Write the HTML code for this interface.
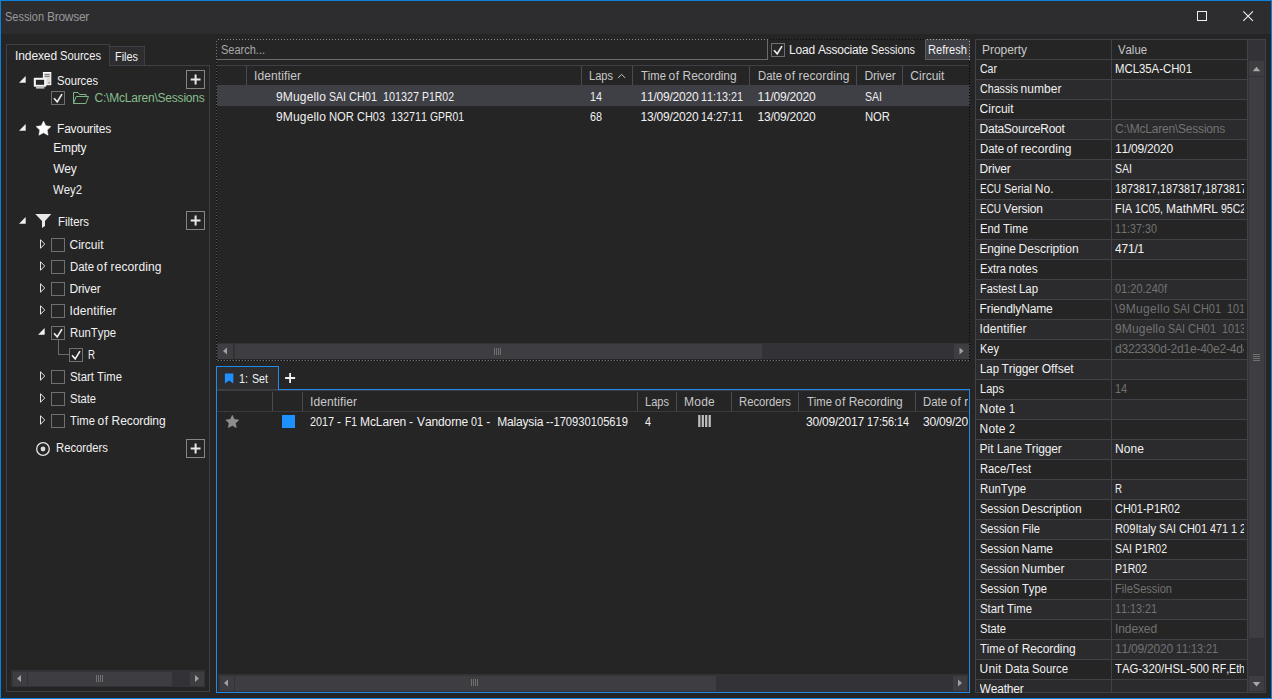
<!DOCTYPE html><html><head><meta charset="utf-8"><title>Session Browser</title><style>
html,body{margin:0;padding:0;}body{width:1272px;height:699px;overflow:hidden;background:#252526;position:relative;font-family:"Liberation Sans",sans-serif;font-size:12px;color:#f1f1f1;}
.a{position:absolute;display:block;}.t{position:absolute;white-space:pre;line-height:14px;height:14px;font-size:12px;font-kerning:none;word-spacing:-0.33px;}.c{overflow:hidden;}.s{display:inline-block;transform-origin:0 0;vertical-align:baseline;}
</style></head><body>
<div class="a" style="left:0px;top:0px;width:1272px;height:699px;border:1px solid #0882de;box-sizing:border-box;"></div>
<div class="a" style="left:1px;top:1px;width:1270px;height:33px;background:#2d2d30;"></div>
<svg class="a" style="left:1190px;top:4px" width="72" height="24" viewBox="0 0 72 24"><rect x="7.5" y="7.5" width="9" height="9" fill="none" stroke="#f1f1f1" stroke-width="1"/><path d="M53.3 7.3 L62.9 16.9 M62.9 7.3 L53.3 16.9" stroke="#f1f1f1" stroke-width="1.1" fill="none"/></svg>
<div class="a" style="left:6px;top:65px;width:204px;height:627px;border:1px solid #3f3f46;box-sizing:border-box;"></div>
<div class="a" style="left:6px;top:44px;width:104px;height:22px;background:#252526;box-sizing:border-box;border:1px solid #3f3f46;border-bottom:none;"></div>
<div class="a" style="left:110px;top:46px;width:35px;height:20px;background:#2d2d30;box-sizing:border-box;border:1px solid #3f3f46;border-left:none;"></div>
<svg class="a" style="left:19.2px;top:76.2px" width="7" height="7" viewBox="0 0 7 7"><path d="M6.7 0 V6.7 H0 Z" fill="#f1f1f1"/></svg>
<svg class="a" style="left:33px;top:72px" width="19" height="17" viewBox="0 0 19 17"><rect x="10.4" y="0.5" width="7.4" height="12.2" fill="#dcdcdc" stroke="#ffffff" stroke-width="1"/><path d="M11.6 2.6h5M11.6 4.4h5" stroke="#777" stroke-width="1"/><rect x="15.6" y="10" width="1" height="1.4" fill="#666"/><rect x="0.8" y="5.8" width="12.6" height="9" rx="0.8" fill="#f4f4f4"/><rect x="2.9" y="7.8" width="8.2" height="5" fill="#252526"/><rect x="3" y="15.2" width="8.4" height="1.3" fill="#e6e6e6"/></svg>
<svg class="a" style="left:186px;top:70px" width="19" height="19" viewBox="0 0 19 19"><rect x="0.5" y="0.5" width="18" height="18" fill="none" stroke="#858585"/><path d="M9.6 4.6 V14.4 M4.7 9.5 H14.5" stroke="#e8e8e8" stroke-width="2" fill="none"/></svg>
<svg class="a" style="left:51px;top:91px" width="14" height="14" viewBox="0 0 14 14"><rect x="0.5" y="0.5" width="13" height="13" fill="#262627" stroke="#707070"/><path d="M3 7.3 L6.2 10.9 L11 3.2" fill="none" stroke="#f1f1f1" stroke-width="1.6"/></svg>
<svg class="a" style="left:72px;top:91px" width="18" height="14" viewBox="0 0 18 14"><path d="M1.5 12.5 V1.5 H6 L7.5 3.5 H14 V5.5 M1.5 12.5 L4.2 5.5 H16.5 L13.8 12.5 Z" fill="none" stroke="#7fb489" stroke-width="1"/></svg>
<svg class="a" style="left:19.2px;top:124.2px" width="7" height="7" viewBox="0 0 7 7"><path d="M6.7 0 V6.7 H0 Z" fill="#f1f1f1"/></svg>
<svg class="a" style="left:35px;top:120px" width="17" height="17" viewBox="0 0 17 17"><path d="M8.50 1.10 L10.79 5.74 L15.92 6.49 L12.21 10.11 L13.08 15.21 L8.50 12.80 L3.92 15.21 L4.79 10.11 L1.08 6.49 L6.21 5.74 Z" fill="#ffffff" stroke="#ffffff" stroke-width="0.5" stroke-linejoin="round"/></svg>
<svg class="a" style="left:19.2px;top:217.2px" width="7" height="7" viewBox="0 0 7 7"><path d="M6.7 0 V6.7 H0 Z" fill="#f1f1f1"/></svg>
<svg class="a" style="left:35px;top:213px" width="17" height="16" viewBox="0 0 17 16"><path d="M0.3 1 H16.3 L10 8 V13 L7 15 V8 Z" fill="#e8e8e8"/></svg>
<svg class="a" style="left:186px;top:211px" width="19" height="19" viewBox="0 0 19 19"><rect x="0.5" y="0.5" width="18" height="18" fill="none" stroke="#858585"/><path d="M9.6 4.6 V14.4 M4.7 9.5 H14.5" stroke="#e8e8e8" stroke-width="2" fill="none"/></svg>
<svg class="a" style="left:40px;top:239px" width="6" height="10" viewBox="0 0 6 10"><path d="M0.5 0.8 L4.8 5 L0.5 9.2 Z" fill="none" stroke="#e6e6e6" stroke-width="1"/></svg>
<svg class="a" style="left:51px;top:238px" width="14" height="14" viewBox="0 0 14 14"><rect x="0.5" y="0.5" width="13" height="13" fill="#262627" stroke="#707070"/></svg>
<svg class="a" style="left:40px;top:261px" width="6" height="10" viewBox="0 0 6 10"><path d="M0.5 0.8 L4.8 5 L0.5 9.2 Z" fill="none" stroke="#e6e6e6" stroke-width="1"/></svg>
<svg class="a" style="left:51px;top:260px" width="14" height="14" viewBox="0 0 14 14"><rect x="0.5" y="0.5" width="13" height="13" fill="#262627" stroke="#707070"/></svg>
<svg class="a" style="left:40px;top:283px" width="6" height="10" viewBox="0 0 6 10"><path d="M0.5 0.8 L4.8 5 L0.5 9.2 Z" fill="none" stroke="#e6e6e6" stroke-width="1"/></svg>
<svg class="a" style="left:51px;top:282px" width="14" height="14" viewBox="0 0 14 14"><rect x="0.5" y="0.5" width="13" height="13" fill="#262627" stroke="#707070"/></svg>
<svg class="a" style="left:40px;top:305px" width="6" height="10" viewBox="0 0 6 10"><path d="M0.5 0.8 L4.8 5 L0.5 9.2 Z" fill="none" stroke="#e6e6e6" stroke-width="1"/></svg>
<svg class="a" style="left:51px;top:304px" width="14" height="14" viewBox="0 0 14 14"><rect x="0.5" y="0.5" width="13" height="13" fill="#262627" stroke="#707070"/></svg>
<svg class="a" style="left:38.2px;top:327.6px" width="7" height="7" viewBox="0 0 7 7"><path d="M6.7 0 V6.7 H0 Z" fill="#f1f1f1"/></svg>
<svg class="a" style="left:51px;top:326px" width="14" height="14" viewBox="0 0 14 14"><rect x="0.5" y="0.5" width="13" height="13" fill="#262627" stroke="#707070"/><path d="M3 7.3 L6.2 10.9 L11 3.2" fill="none" stroke="#f1f1f1" stroke-width="1.6"/></svg>
<svg class="a" style="left:40px;top:371px" width="6" height="10" viewBox="0 0 6 10"><path d="M0.5 0.8 L4.8 5 L0.5 9.2 Z" fill="none" stroke="#e6e6e6" stroke-width="1"/></svg>
<svg class="a" style="left:51px;top:370px" width="14" height="14" viewBox="0 0 14 14"><rect x="0.5" y="0.5" width="13" height="13" fill="#262627" stroke="#707070"/></svg>
<svg class="a" style="left:40px;top:393px" width="6" height="10" viewBox="0 0 6 10"><path d="M0.5 0.8 L4.8 5 L0.5 9.2 Z" fill="none" stroke="#e6e6e6" stroke-width="1"/></svg>
<svg class="a" style="left:51px;top:392px" width="14" height="14" viewBox="0 0 14 14"><rect x="0.5" y="0.5" width="13" height="13" fill="#262627" stroke="#707070"/></svg>
<svg class="a" style="left:40px;top:415px" width="6" height="10" viewBox="0 0 6 10"><path d="M0.5 0.8 L4.8 5 L0.5 9.2 Z" fill="none" stroke="#e6e6e6" stroke-width="1"/></svg>
<svg class="a" style="left:51px;top:414px" width="14" height="14" viewBox="0 0 14 14"><rect x="0.5" y="0.5" width="13" height="13" fill="#262627" stroke="#707070"/></svg>
<div class="a" style="left:58px;top:340px;width:11px;height:14px;border-left:1px solid #6a6a6a;border-bottom:1px solid #6a6a6a;"></div>
<svg class="a" style="left:69px;top:348px" width="14" height="14" viewBox="0 0 14 14"><rect x="0.5" y="0.5" width="13" height="13" fill="#262627" stroke="#707070"/><path d="M3 7.3 L6.2 10.9 L11 3.2" fill="none" stroke="#f1f1f1" stroke-width="1.6"/></svg>
<svg class="a" style="left:35px;top:441px" width="16" height="16" viewBox="0 0 16 16"><circle cx="8" cy="8" r="6.3" fill="none" stroke="#e6e6e6" stroke-width="1.3"/><circle cx="8" cy="8" r="2.4" fill="#dcdcdc"/></svg>
<svg class="a" style="left:186px;top:439px" width="19" height="19" viewBox="0 0 19 19"><rect x="0.5" y="0.5" width="18" height="18" fill="none" stroke="#858585"/><path d="M9.6 4.6 V14.4 M4.7 9.5 H14.5" stroke="#e8e8e8" stroke-width="2" fill="none"/></svg>
<div class="a" style="left:11px;top:670px;width:194px;height:17px;background:#333337;"></div>
<div class="a" style="left:12.5px;top:671.5px;width:14px;height:14.0px;background:#3e3e42;"></div>
<div class="a" style="left:189.5px;top:671.5px;width:14px;height:14.0px;background:#3e3e42;"></div>
<div class="a" style="left:28px;top:671.5px;width:144px;height:14.0px;background:#3e3e42;"></div>
<svg class="a" style="left:11px;top:670px" width="195" height="17" viewBox="0 0 195 17"><path d="M6.0 8.5 l4 -3.5 v7 Z" fill="#a0a0a0"/><path d="M188.0 8.5 l-4 -3.5 v7 Z" fill="#a0a0a0"/><path d="M85.5 5 v7 m2 -7 v7 m2 -7 v7 m2 -7 v7" stroke="#707070" stroke-width="1" fill="none"/></svg>
<div class="a" style="left:216px;top:39px;width:552px;height:21px;background:#252526;border:1px solid #6a6a6a;box-sizing:border-box;"></div>
<svg class="a" style="left:771px;top:43px" width="14" height="14" viewBox="0 0 14 14"><rect x="0.5" y="0.5" width="13" height="13" fill="#262627" stroke="#707070"/><path d="M3 7.3 L6.2 10.9 L11 3.2" fill="none" stroke="#f1f1f1" stroke-width="1.6"/></svg>
<div class="a" style="left:925px;top:39px;width:45px;height:21px;background:#3f3f46;border:1px solid #5e5e63;box-sizing:border-box;"></div>
<div class="a" style="left:217px;top:65px;width:753px;height:1px;background:#3f3f46;"></div>
<div class="a" style="left:246px;top:66px;width:1px;height:19px;background:#4a4a50;"></div>
<div class="a" style="left:581px;top:66px;width:1px;height:19px;background:#4a4a50;"></div>
<div class="a" style="left:632px;top:66px;width:1px;height:19px;background:#4a4a50;"></div>
<div class="a" style="left:749px;top:66px;width:1px;height:19px;background:#4a4a50;"></div>
<div class="a" style="left:856px;top:66px;width:1px;height:19px;background:#4a4a50;"></div>
<div class="a" style="left:902px;top:66px;width:1px;height:19px;background:#4a4a50;"></div>
<svg class="a" style="left:617px;top:73px" width="9" height="6" viewBox="0 0 9 6"><path d="M1.1 4.9 L4.6 1.3 L8.1 4.9" fill="none" stroke="#c8c8c8" stroke-width="1"/></svg>
<div class="a" style="left:217px;top:85px;width:753px;height:21px;background:#3f3f46;"></div>
<div class="a" style="left:216.5px;top:343px;width:753.5px;height:16px;background:#333337;"></div>
<div class="a" style="left:218.0px;top:343.5px;width:15px;height:15.0px;background:#3e3e42;"></div>
<div class="a" style="left:953.5px;top:343.5px;width:15px;height:15.0px;background:#3e3e42;"></div>
<div class="a" style="left:234.5px;top:343.5px;width:527.0px;height:15.0px;background:#3e3e42;"></div>
<svg class="a" style="left:216px;top:343px" width="755" height="16" viewBox="0 0 755 16"><path d="M7.0 8.0 l4 -3.5 v7 Z" fill="#a0a0a0"/><path d="M747.5 8.0 l-4 -3.5 v7 Z" fill="#a0a0a0"/><path d="M278.5 5 v7 m2 -7 v7 m2 -7 v7 m2 -7 v7" stroke="#707070" stroke-width="1" fill="none"/></svg>
<div class="a" style="left:768px;top:39px;width:157px;height:1px;background:repeating-linear-gradient(to right,transparent 0,transparent 2px,#0c0c0c 2px,#0c0c0c 3px);"></div>
<div class="a" style="left:216px;top:360px;width:754px;height:1px;background:repeating-linear-gradient(to right,#0a0a0a 0,#0a0a0a 1px,#3e3e3e 1px,#3e3e3e 2px,#747474 2px,#747474 3px);"></div>
<div class="a" style="left:216px;top:60px;width:1px;height:300px;background:repeating-linear-gradient(to bottom,#101010 0,#101010 2px,#5c5c5c 2px,#5c5c5c 3px);"></div>
<div class="a" style="left:969px;top:60px;width:1px;height:300px;background:repeating-linear-gradient(to bottom,transparent 0,transparent 2px,#000 2px,#000 3px);"></div>
<div class="a" style="left:216px;top:39px;width:552px;height:1px;background:repeating-linear-gradient(to right,#252526 0,#252526 2px,#8c8c8c 2px,#8c8c8c 3px);"></div>
<div class="a" style="left:216px;top:39px;width:1px;height:21px;background:repeating-linear-gradient(to bottom,#252526 0,#252526 2px,#787878 2px,#787878 3px);"></div>
<div class="a" style="left:925px;top:39px;width:45px;height:1px;background:repeating-linear-gradient(to right,#434349 0,#434349 2px,#a4a4a4 2px,#a4a4a4 3px);"></div>
<div class="a" style="left:969px;top:39px;width:1px;height:21px;background:repeating-linear-gradient(to bottom,#434349 0,#434349 2px,#a4a4a4 2px,#a4a4a4 3px);"></div>
<div class="a" style="left:216px;top:389px;width:754px;height:304px;border:1px solid #2389e8;box-sizing:border-box;"></div>
<div class="a" style="left:216px;top:366px;width:63px;height:24px;background:#2d2d30;box-sizing:border-box;border:1px solid #2389e8;border-bottom:none;"></div>
<div class="a" style="left:217px;top:389px;width:61px;height:1px;background:#3a3f48;"></div>
<div class="a" style="left:217px;top:390px;width:752px;height:1px;background:#3a3a40;"></div>
<svg class="a" style="left:224px;top:373px" width="10" height="11" viewBox="0 0 10 11"><path d="M0.9 0.4 H9.3 V10.5 L5.1 7.4 L0.9 10.5 Z" fill="#1e90ff"/></svg>
<svg class="a" style="left:284px;top:372px" width="12" height="12" viewBox="0 0 12 12"><path d="M6.1 1 V11 M1.1 6 H11.1" stroke="#f1f1f1" stroke-width="1.8" fill="none"/></svg>
<div class="a" style="left:217px;top:411px;width:752px;height:1px;background:#3a3a3e;"></div>
<div class="a" style="left:272px;top:392px;width:1px;height:19px;background:#4a4a50;"></div>
<div class="a" style="left:302px;top:392px;width:1px;height:19px;background:#4a4a50;"></div>
<div class="a" style="left:637px;top:392px;width:1px;height:19px;background:#4a4a50;"></div>
<div class="a" style="left:676px;top:392px;width:1px;height:19px;background:#4a4a50;"></div>
<div class="a" style="left:731px;top:392px;width:1px;height:19px;background:#4a4a50;"></div>
<div class="a" style="left:798px;top:392px;width:1px;height:19px;background:#4a4a50;"></div>
<div class="a" style="left:915px;top:392px;width:1px;height:19px;background:#4a4a50;"></div>
<svg class="a" style="left:225px;top:414px" width="15" height="15" viewBox="0 0 15 15"><path d="M7.30 1.20 L9.30 5.35 L13.86 5.97 L10.53 9.15 L11.36 13.68 L7.30 11.50 L3.24 13.68 L4.07 9.15 L0.74 5.97 L5.30 5.35 Z" fill="#8e8e8e" stroke="#8e8e8e" stroke-width="0.5" stroke-linejoin="round"/></svg>
<div class="a" style="left:282px;top:415px;width:13px;height:13px;background:#1e90ff;"></div>
<svg class="a" style="left:698px;top:415px" width="14" height="12" viewBox="0 0 14 12"><path d="M0.2 0h2.2v12h-2.2zM3.7 0h2.2v12h-2.2zM7.1 0h2.2v12h-2.2zM10.6 0h2.2v12h-2.2z" fill="#c2c2c2"/></svg>
<div class="a" style="left:218px;top:674px;width:750px;height:18px;background:#333337;"></div>
<div class="a" style="left:219.5px;top:675.5px;width:14px;height:15.0px;background:#3e3e42;"></div>
<div class="a" style="left:952.5px;top:675.5px;width:14px;height:15.0px;background:#3e3e42;"></div>
<div class="a" style="left:235px;top:675.5px;width:481px;height:15.0px;background:#3e3e42;"></div>
<svg class="a" style="left:218px;top:674px" width="751" height="18" viewBox="0 0 751 18"><path d="M6.0 9.0 l4 -3.5 v7 Z" fill="#a0a0a0"/><path d="M744.0 9.0 l-4 -3.5 v7 Z" fill="#a0a0a0"/><path d="M253.5 5 v7 m2 -7 v7 m2 -7 v7 m2 -7 v7" stroke="#707070" stroke-width="1" fill="none"/></svg>
<div class="a" style="left:975px;top:39px;width:291px;height:654px;background:#414147;"></div>
<div class="a" style="left:976px;top:40px;width:135px;height:19px;background:#252526;"></div>
<div class="a" style="left:1112px;top:40px;width:135px;height:19px;background:#252526;"></div>
<div class="a" style="left:1248px;top:40px;width:17px;height:20px;background:#333337;"></div>
<div class="a" style="left:976px;top:60px;width:135px;height:19px;background:#252526;"></div>
<div class="a" style="left:1112px;top:60px;width:135px;height:19px;background:#252526;"></div>
<div class="a" style="left:976px;top:80px;width:135px;height:19px;background:#2b2b2d;"></div>
<div class="a" style="left:1112px;top:80px;width:135px;height:19px;background:#2b2b2d;"></div>
<div class="a" style="left:976px;top:100px;width:135px;height:19px;background:#252526;"></div>
<div class="a" style="left:1112px;top:100px;width:135px;height:19px;background:#252526;"></div>
<div class="a" style="left:976px;top:120px;width:135px;height:19px;background:#2b2b2d;"></div>
<div class="a" style="left:1112px;top:120px;width:135px;height:19px;background:#2b2b2d;"></div>
<div class="a" style="left:976px;top:140px;width:135px;height:19px;background:#252526;"></div>
<div class="a" style="left:1112px;top:140px;width:135px;height:19px;background:#252526;"></div>
<div class="a" style="left:976px;top:160px;width:135px;height:19px;background:#2b2b2d;"></div>
<div class="a" style="left:1112px;top:160px;width:135px;height:19px;background:#2b2b2d;"></div>
<div class="a" style="left:976px;top:180px;width:135px;height:19px;background:#252526;"></div>
<div class="a" style="left:1112px;top:180px;width:135px;height:19px;background:#252526;"></div>
<div class="a" style="left:976px;top:200px;width:135px;height:19px;background:#2b2b2d;"></div>
<div class="a" style="left:1112px;top:200px;width:135px;height:19px;background:#2b2b2d;"></div>
<div class="a" style="left:976px;top:220px;width:135px;height:19px;background:#252526;"></div>
<div class="a" style="left:1112px;top:220px;width:135px;height:19px;background:#252526;"></div>
<div class="a" style="left:976px;top:240px;width:135px;height:19px;background:#2b2b2d;"></div>
<div class="a" style="left:1112px;top:240px;width:135px;height:19px;background:#2b2b2d;"></div>
<div class="a" style="left:976px;top:260px;width:135px;height:19px;background:#252526;"></div>
<div class="a" style="left:1112px;top:260px;width:135px;height:19px;background:#252526;"></div>
<div class="a" style="left:976px;top:280px;width:135px;height:19px;background:#2b2b2d;"></div>
<div class="a" style="left:1112px;top:280px;width:135px;height:19px;background:#2b2b2d;"></div>
<div class="a" style="left:976px;top:300px;width:135px;height:19px;background:#252526;"></div>
<div class="a" style="left:1112px;top:300px;width:135px;height:19px;background:#252526;"></div>
<div class="a" style="left:976px;top:320px;width:135px;height:19px;background:#2b2b2d;"></div>
<div class="a" style="left:1112px;top:320px;width:135px;height:19px;background:#2b2b2d;"></div>
<div class="a" style="left:976px;top:340px;width:135px;height:19px;background:#252526;"></div>
<div class="a" style="left:1112px;top:340px;width:135px;height:19px;background:#252526;"></div>
<div class="a" style="left:976px;top:360px;width:135px;height:19px;background:#2b2b2d;"></div>
<div class="a" style="left:1112px;top:360px;width:135px;height:19px;background:#2b2b2d;"></div>
<div class="a" style="left:976px;top:380px;width:135px;height:19px;background:#252526;"></div>
<div class="a" style="left:1112px;top:380px;width:135px;height:19px;background:#252526;"></div>
<div class="a" style="left:976px;top:400px;width:135px;height:19px;background:#2b2b2d;"></div>
<div class="a" style="left:1112px;top:400px;width:135px;height:19px;background:#2b2b2d;"></div>
<div class="a" style="left:976px;top:420px;width:135px;height:19px;background:#252526;"></div>
<div class="a" style="left:1112px;top:420px;width:135px;height:19px;background:#252526;"></div>
<div class="a" style="left:976px;top:440px;width:135px;height:19px;background:#2b2b2d;"></div>
<div class="a" style="left:1112px;top:440px;width:135px;height:19px;background:#2b2b2d;"></div>
<div class="a" style="left:976px;top:460px;width:135px;height:19px;background:#252526;"></div>
<div class="a" style="left:1112px;top:460px;width:135px;height:19px;background:#252526;"></div>
<div class="a" style="left:976px;top:480px;width:135px;height:19px;background:#2b2b2d;"></div>
<div class="a" style="left:1112px;top:480px;width:135px;height:19px;background:#2b2b2d;"></div>
<div class="a" style="left:976px;top:500px;width:135px;height:19px;background:#252526;"></div>
<div class="a" style="left:1112px;top:500px;width:135px;height:19px;background:#252526;"></div>
<div class="a" style="left:976px;top:520px;width:135px;height:19px;background:#2b2b2d;"></div>
<div class="a" style="left:1112px;top:520px;width:135px;height:19px;background:#2b2b2d;"></div>
<div class="a" style="left:976px;top:540px;width:135px;height:19px;background:#252526;"></div>
<div class="a" style="left:1112px;top:540px;width:135px;height:19px;background:#252526;"></div>
<div class="a" style="left:976px;top:560px;width:135px;height:19px;background:#2b2b2d;"></div>
<div class="a" style="left:1112px;top:560px;width:135px;height:19px;background:#2b2b2d;"></div>
<div class="a" style="left:976px;top:580px;width:135px;height:19px;background:#252526;"></div>
<div class="a" style="left:1112px;top:580px;width:135px;height:19px;background:#252526;"></div>
<div class="a" style="left:976px;top:600px;width:135px;height:19px;background:#2b2b2d;"></div>
<div class="a" style="left:1112px;top:600px;width:135px;height:19px;background:#2b2b2d;"></div>
<div class="a" style="left:976px;top:620px;width:135px;height:19px;background:#252526;"></div>
<div class="a" style="left:1112px;top:620px;width:135px;height:19px;background:#252526;"></div>
<div class="a" style="left:976px;top:640px;width:135px;height:19px;background:#2b2b2d;"></div>
<div class="a" style="left:1112px;top:640px;width:135px;height:19px;background:#2b2b2d;"></div>
<div class="a" style="left:976px;top:660px;width:135px;height:19px;background:#252526;"></div>
<div class="a" style="left:1112px;top:660px;width:135px;height:19px;background:#252526;"></div>
<div class="a" style="left:976px;top:680px;width:135px;height:12px;background:#2b2b2d;"></div>
<div class="a" style="left:1112px;top:680px;width:135px;height:12px;background:#2b2b2d;"></div>
<div class="a" style="left:1248px;top:60px;width:17px;height:632px;background:#333337;"></div>
<div class="a" style="left:1249px;top:61px;width:15px;height:15px;background:#3e3e42;"></div>
<div class="a" style="left:1249px;top:676px;width:15px;height:15px;background:#3e3e42;"></div>
<div class="a" style="left:1249px;top:77px;width:15px;height:561px;background:#3e3e42;"></div>
<svg class="a" style="left:1249px;top:61px" width="15" height="631" viewBox="0 0 15 631"><path d="M7.5 5.8 l3.7 4.4 h-7.4 Z" fill="#a8a8a8"/><path d="M7.5 625.4 l3.7 -4.4 h-7.4 Z" fill="#a8a8a8"/><path d="M4 293.5 h7 m-7 2 h7 m-7 2 h7 m-7 2 h7" stroke="#707070" stroke-width="1" fill="none"/></svg>
<div class="a" style="left:976px;top:692px;width:290px;height:1px;background:#414147;"></div>
<div class="a" style="left:972px;top:693px;width:298px;height:5px;background:#252526;"></div>
<span class="t" style="left:5px;top:10px;color:#999999;"><span class="s" style="width:39px;transform:scaleX(0.913)">Session</span> <span style="letter-spacing:-0.29px">Browser</span></span>
<span class="t" style="left:15px;top:49px;"><span style="letter-spacing:-0.1px">Indexed</span> <span class="s" style="width:41px;transform:scaleX(0.931)">Sources</span></span>
<span class="t" style="left:115px;top:50px;"><span class="s" style="width:23px;transform:scaleX(0.908)">Files</span></span>
<span class="t" style="left:57px;top:74px;"><span class="s" style="width:41px;transform:scaleX(0.931)">Sources</span></span>
<span class="t" style="left:94.5px;top:91px;color:#85bd8c;letter-spacing:-0.21px;">C:\McLaren\Sessions</span>
<span class="t" style="left:57px;top:122px;letter-spacing:-0.2px;">Favourites</span>
<span class="t" style="left:53.3px;top:141px;letter-spacing:-0.2px;">Empty</span>
<span class="t" style="left:53.3px;top:162px;letter-spacing:-0.33px;">Wey</span>
<span class="t" style="left:53.3px;top:183px;"><span class="s" style="width:29px;transform:scaleX(0.945)">Wey2</span></span>
<span class="t" style="left:57.5px;top:215px;"><span class="s" style="width:31px;transform:scaleX(0.949)">Filters</span></span>
<span class="t" style="left:69.5px;top:238px;letter-spacing:0px;">Circuit</span>
<span class="t" style="left:69.5px;top:260px;"><span class="s" style="width:24px;transform:scaleX(0.947)">Date</span> <span style="letter-spacing:0.5px">of</span> <span style="letter-spacing:0.11px">recording</span></span>
<span class="t" style="left:69.5px;top:282px;letter-spacing:-0.17px;">Driver</span>
<span class="t" style="left:69.5px;top:304px;letter-spacing:0.1px;">Identifier</span>
<span class="t" style="left:69.5px;top:326px;"><span class="s" style="width:46px;transform:scaleX(0.945)">RunType</span></span>
<span class="t" style="left:69.5px;top:370px;"><span class="s" style="width:24px;transform:scaleX(0.947)">Start</span> <span class="s" style="width:25px;transform:scaleX(0.937)">Time</span></span>
<span class="t" style="left:69.5px;top:392px;"><span class="s" style="width:26px;transform:scaleX(0.928)">State</span></span>
<span class="t" style="left:69.5px;top:414px;"><span class="s" style="width:25px;transform:scaleX(0.937)">Time</span> <span style="letter-spacing:0.5px">of</span> <span style="letter-spacing:-0.08px">Recording</span></span>
<span class="t" style="left:87.5px;top:348px;"><span class="s" style="width:7px;transform:scaleX(0.808)">R</span></span>
<span class="t" style="left:56.2px;top:441px;"><span class="s" style="width:52px;transform:scaleX(0.939)">Recorders</span></span>
<span class="t" style="left:221px;top:43px;color:#a8a8a8;"><span class="s" style="width:44px;transform:scaleX(0.916)">Search...</span></span>
<span class="t" style="left:789px;top:43px;"><span style="letter-spacing:-0.17px">Load</span> <span style="letter-spacing:-0.23px">Associate</span> <span class="s" style="width:44px;transform:scaleX(0.904)">Sessions</span></span>
<span class="t" style="left:928.3px;top:43px;"><span class="s" style="width:39px;transform:scaleX(0.928)">Refresh</span></span>
<span class="t" style="left:254px;top:69px;color:#c8c8c8;letter-spacing:0.1px;">Identifier</span>
<span class="t" style="left:589px;top:69px;color:#c8c8c8;"><span class="s" style="width:24px;transform:scaleX(0.922)">Laps</span></span>
<span class="t" style="left:640.5px;top:69px;color:#c8c8c8;"><span class="s" style="width:25px;transform:scaleX(0.937)">Time</span> <span style="letter-spacing:0.5px">of</span> <span style="letter-spacing:-0.08px">Recording</span></span>
<span class="t" style="left:757.5px;top:69px;color:#c8c8c8;"><span class="s" style="width:24px;transform:scaleX(0.947)">Date</span> <span style="letter-spacing:0.5px">of</span> <span style="letter-spacing:0.11px">recording</span></span>
<span class="t" style="left:864.5px;top:69px;color:#c8c8c8;letter-spacing:-0.17px;">Driver</span>
<span class="t" style="left:910.3px;top:69px;color:#c8c8c8;letter-spacing:0px;">Circuit</span>
<span class="t" style="left:276px;top:90px;"><span style="letter-spacing:0.16px">9Mugello</span> <span class="s" style="width:17px;transform:scaleX(0.879)">SAI</span> <span class="s" style="width:28px;transform:scaleX(0.913)">CH01</span>  <span class="s" style="width:36px;transform:scaleX(0.899)">101327</span> <span class="s" style="width:32px;transform:scaleX(0.872)">P1R02</span></span>
<span class="t" style="left:276px;top:110px;"><span style="letter-spacing:0.16px">9Mugello</span> <span class="s" style="width:25px;transform:scaleX(0.937)">NOR</span> <span class="s" style="width:28px;transform:scaleX(0.913)">CH03</span>  <span class="s" style="width:36px;transform:scaleX(0.899)">132711</span> <span class="s" style="width:34px;transform:scaleX(0.864)">GPR01</span></span>
<span class="t" style="left:589.5px;top:90px;"><span class="s" style="width:12px;transform:scaleX(0.899)">14</span></span>
<span class="t" style="left:589.5px;top:110px;"><span class="s" style="width:12px;transform:scaleX(0.899)">68</span></span>
<span class="t" style="left:640.5px;top:90px;"><span style="letter-spacing:-0.21px">11/09/2020</span> <span class="s" style="width:42px;transform:scaleX(0.899)">11:13:21</span></span>
<span class="t" style="left:640.5px;top:110px;"><span style="letter-spacing:-0.21px">13/09/2020</span> <span class="s" style="width:42px;transform:scaleX(0.899)">14:27:11</span></span>
<span class="t" style="left:757.5px;top:90px;letter-spacing:-0.21px;">11/09/2020</span>
<span class="t" style="left:757.5px;top:110px;letter-spacing:-0.21px;">13/09/2020</span>
<span class="t" style="left:864.5px;top:90px;"><span class="s" style="width:17px;transform:scaleX(0.879)">SAI</span></span>
<span class="t" style="left:864.5px;top:110px;"><span class="s" style="width:25px;transform:scaleX(0.937)">NOR</span></span>
<span class="t" style="left:238.9px;top:372px;"><span class="s" style="width:9px;transform:scaleX(0.899)">1:</span></span>
<span class="t" style="left:252.2px;top:372px;"><span class="s" style="width:16px;transform:scaleX(0.888)">Set</span></span>
<span class="t" style="left:310px;top:395px;color:#c8c8c8;letter-spacing:0.1px;">Identifier</span>
<span class="t" style="left:645px;top:395px;color:#c8c8c8;"><span class="s" style="width:24px;transform:scaleX(0.922)">Laps</span></span>
<span class="t" style="left:684px;top:395px;color:#c8c8c8;letter-spacing:0.25px;">Mode</span>
<span class="t" style="left:739px;top:395px;color:#c8c8c8;"><span class="s" style="width:52px;transform:scaleX(0.939)">Recorders</span></span>
<span class="t" style="left:806.7px;top:395px;color:#c8c8c8;"><span class="s" style="width:25px;transform:scaleX(0.937)">Time</span> <span style="letter-spacing:0.5px">of</span> <span style="letter-spacing:-0.08px">Recording</span></span>
<span class="t c" style="left:923.3px;top:395px;color:#c8c8c8;width:44.7px;"><span class="s" style="width:24px;transform:scaleX(0.947)">Date</span> <span style="letter-spacing:0.5px">of</span> <span style="letter-spacing:0.11px">recording</span></span>
<span class="t" style="left:310px;top:415px;"><span class="s" style="width:24px;transform:scaleX(0.899)">2017</span> <span style="letter-spacing:1px">-</span> <span class="s" style="width:12px;transform:scaleX(0.857)">F1</span> <span style="letter-spacing:-0.1px">McLaren</span> <span style="letter-spacing:1px">-</span> <span style="letter-spacing:-0.13px">Vandorne</span> <span class="s" style="width:12px;transform:scaleX(0.899)">01</span> <span style="letter-spacing:1px">-</span>  <span style="letter-spacing:-0.17px">Malaysia</span> <span class="s" style="width:82px;transform:scaleX(0.931)">--170930105619</span></span>
<span class="t" style="left:645px;top:415px;"><span class="s" style="width:6px;transform:scaleX(0.899)">4</span></span>
<span class="t" style="left:806px;top:415px;"><span style="letter-spacing:-0.21px">30/09/2017</span> <span class="s" style="width:42px;transform:scaleX(0.899)">17:56:14</span></span>
<span class="t c" style="left:923px;top:415px;letter-spacing:-0.21px;width:45px;">30/09/2017</span>
<span class="t" style="left:982px;top:43px;color:#c8c8c8;letter-spacing:-0.04px;">Property</span>
<span class="t" style="left:1118px;top:43px;color:#c8c8c8;"><span class="s" style="width:29px;transform:scaleX(0.945)">Value</span></span>
<span class="t c" style="left:979.6px;top:62px;width:130.4px;"><span class="s" style="width:17px;transform:scaleX(0.879)">Car</span></span>
<span class="t c" style="left:1115px;top:62px;width:129px;"><span class="s" style="width:77px;transform:scaleX(0.946)">MCL35A-CH01</span></span>
<span class="t c" style="left:979.6px;top:82px;width:130.4px;"><span class="s" style="width:38px;transform:scaleX(0.890)">Chassis</span> <span style="letter-spacing:0.05px">number</span></span>
<span class="t c" style="left:979.6px;top:102px;letter-spacing:0px;width:130.4px;">Circuit</span>
<span class="t c" style="left:979.6px;top:122px;letter-spacing:-0.27px;width:130.4px;">DataSourceRoot</span>
<span class="t c" style="left:1115px;top:122px;color:#727272;letter-spacing:-0.21px;width:129px;">C:\McLaren\Sessions</span>
<span class="t c" style="left:979.6px;top:142px;width:130.4px;"><span class="s" style="width:24px;transform:scaleX(0.947)">Date</span> <span style="letter-spacing:0.5px">of</span> <span style="letter-spacing:0.11px">recording</span></span>
<span class="t c" style="left:1115px;top:142px;letter-spacing:-0.21px;width:129px;">11/09/2020</span>
<span class="t c" style="left:979.6px;top:162px;letter-spacing:-0.17px;width:130.4px;">Driver</span>
<span class="t c" style="left:1115px;top:162px;width:129px;"><span class="s" style="width:17px;transform:scaleX(0.879)">SAI</span></span>
<span class="t c" style="left:979.6px;top:182px;width:130.4px;"><span class="s" style="width:21px;transform:scaleX(0.829)">ECU</span> <span class="s" style="width:28px;transform:scaleX(0.913)">Serial</span> <span style="letter-spacing:0.11px">No.</span></span>
<span class="t c" style="left:1115px;top:182px;width:129px;"><span class="s" style="width:177px;transform:scaleX(0.899)">1873817,1873817,1873817,1873817</span></span>
<span class="t c" style="left:979.6px;top:202px;width:130.4px;"><span class="s" style="width:21px;transform:scaleX(0.829)">ECU</span> <span style="letter-spacing:-0.24px">Version</span></span>
<span class="t c" style="left:1115px;top:202px;width:129px;"><span class="s" style="width:17px;transform:scaleX(0.911)">FIA</span> <span class="s" style="width:28px;transform:scaleX(0.874)">1C05,</span> <span style="letter-spacing:0px">MathMRL</span> <span class="s" style="width:28px;transform:scaleX(0.874)">95C2,</span> <span class="s" style="width:22px;transform:scaleX(0.892)">TAG</span></span>
<span class="t c" style="left:979.6px;top:222px;width:130.4px;"><span class="s" style="width:20px;transform:scaleX(0.937)">End</span> <span class="s" style="width:25px;transform:scaleX(0.937)">Time</span></span>
<span class="t c" style="left:1115px;top:222px;color:#727272;width:129px;"><span class="s" style="width:42px;transform:scaleX(0.899)">11:37:30</span></span>
<span class="t c" style="left:979.6px;top:242px;width:130.4px;"><span style="letter-spacing:-0.23px">Engine</span> <span style="letter-spacing:0px">Description</span></span>
<span class="t c" style="left:1115px;top:242px;letter-spacing:-0.21px;width:129px;">471/1</span>
<span class="t c" style="left:979.6px;top:262px;width:130.4px;"><span class="s" style="width:26px;transform:scaleX(0.928)">Extra</span> <span style="letter-spacing:-0.07px">notes</span></span>
<span class="t c" style="left:979.6px;top:282px;width:130.4px;"><span class="s" style="width:36px;transform:scaleX(0.915)">Fastest</span> <span class="s" style="width:19px;transform:scaleX(0.949)">Lap</span></span>
<span class="t c" style="left:1115px;top:282px;color:#727272;width:129px;"><span class="s" style="width:52px;transform:scaleX(0.917)">01:20.240f</span></span>
<span class="t c" style="left:979.6px;top:302px;letter-spacing:-0.14px;width:130.4px;">FriendlyName</span>
<span class="t c" style="left:1115px;top:302px;color:#727272;width:129px;"><span style="letter-spacing:0.33px">\9Mugello</span> <span class="s" style="width:17px;transform:scaleX(0.879)">SAI</span> <span class="s" style="width:28px;transform:scaleX(0.913)">CH01</span>  <span class="s" style="width:36px;transform:scaleX(0.899)">101327</span> <span class="s" style="width:32px;transform:scaleX(0.872)">P1R02</span></span>
<span class="t c" style="left:979.6px;top:322px;letter-spacing:0.1px;width:130.4px;">Identifier</span>
<span class="t c" style="left:1115px;top:322px;color:#727272;width:129px;"><span style="letter-spacing:0.16px">9Mugello</span> <span class="s" style="width:17px;transform:scaleX(0.879)">SAI</span> <span class="s" style="width:28px;transform:scaleX(0.913)">CH01</span>  <span class="s" style="width:36px;transform:scaleX(0.899)">101327</span> <span class="s" style="width:32px;transform:scaleX(0.872)">P1R02</span></span>
<span class="t c" style="left:979.6px;top:342px;width:130.4px;"><span class="s" style="width:19px;transform:scaleX(0.919)">Key</span></span>
<span class="t c" style="left:1115px;top:342px;color:#727272;letter-spacing:-0.21px;width:129px;">d322330d-2d1e-40e2-4d4f-a1b2c3d4</span>
<span class="t c" style="left:979.6px;top:362px;width:130.4px;"><span class="s" style="width:19px;transform:scaleX(0.949)">Lap</span> <span style="letter-spacing:-0.14px">Trigger</span> <span style="letter-spacing:0px">Offset</span></span>
<span class="t c" style="left:979.6px;top:382px;width:130.4px;"><span class="s" style="width:24px;transform:scaleX(0.922)">Laps</span></span>
<span class="t c" style="left:1115px;top:382px;color:#727272;width:129px;"><span class="s" style="width:12px;transform:scaleX(0.899)">14</span></span>
<span class="t c" style="left:979.6px;top:402px;width:130.4px;"><span style="letter-spacing:0.16px">Note</span> <span class="s" style="width:6px;transform:scaleX(0.899)">1</span></span>
<span class="t c" style="left:979.6px;top:422px;width:130.4px;"><span style="letter-spacing:0.16px">Note</span> <span class="s" style="width:6px;transform:scaleX(0.899)">2</span></span>
<span class="t c" style="left:979.6px;top:442px;width:130.4px;"><span style="letter-spacing:0px">Pit</span> <span class="s" style="width:25px;transform:scaleX(0.936)">Lane</span> <span style="letter-spacing:-0.14px">Trigger</span></span>
<span class="t c" style="left:1115px;top:442px;letter-spacing:0.08px;width:129px;">None</span>
<span class="t c" style="left:979.6px;top:462px;width:130.4px;"><span class="s" style="width:51px;transform:scaleX(0.933)">Race/Test</span></span>
<span class="t c" style="left:979.6px;top:482px;width:130.4px;"><span class="s" style="width:46px;transform:scaleX(0.945)">RunType</span></span>
<span class="t c" style="left:1115px;top:482px;width:129px;"><span class="s" style="width:7px;transform:scaleX(0.808)">R</span></span>
<span class="t c" style="left:979.6px;top:502px;width:130.4px;"><span class="s" style="width:39px;transform:scaleX(0.913)">Session</span> <span style="letter-spacing:0px">Description</span></span>
<span class="t c" style="left:1115px;top:502px;width:129px;"><span class="s" style="width:65px;transform:scaleX(0.911)">CH01-P1R02</span></span>
<span class="t c" style="left:979.6px;top:522px;width:130.4px;"><span class="s" style="width:39px;transform:scaleX(0.913)">Session</span> <span class="s" style="width:18px;transform:scaleX(0.931)">File</span></span>
<span class="t c" style="left:1115px;top:522px;width:129px;"><span class="s" style="width:41px;transform:scaleX(0.931)">R09Italy</span> <span class="s" style="width:17px;transform:scaleX(0.879)">SAI</span> <span class="s" style="width:28px;transform:scaleX(0.913)">CH01</span> <span class="s" style="width:18px;transform:scaleX(0.899)">471</span> <span class="s" style="width:6px;transform:scaleX(0.899)">1</span> <span class="s" style="width:24px;transform:scaleX(0.899)">2020</span></span>
<span class="t c" style="left:979.6px;top:542px;width:130.4px;"><span class="s" style="width:39px;transform:scaleX(0.913)">Session</span> <span style="letter-spacing:-0.25px">Name</span></span>
<span class="t c" style="left:1115px;top:542px;width:129px;"><span class="s" style="width:17px;transform:scaleX(0.879)">SAI</span> <span class="s" style="width:32px;transform:scaleX(0.872)">P1R02</span></span>
<span class="t c" style="left:979.6px;top:562px;width:130.4px;"><span class="s" style="width:39px;transform:scaleX(0.913)">Session</span> <span style="letter-spacing:0.05px">Number</span></span>
<span class="t c" style="left:1115px;top:562px;width:129px;"><span class="s" style="width:32px;transform:scaleX(0.872)">P1R02</span></span>
<span class="t c" style="left:979.6px;top:582px;width:130.4px;"><span class="s" style="width:39px;transform:scaleX(0.913)">Session</span> <span class="s" style="width:25px;transform:scaleX(0.937)">Type</span></span>
<span class="t c" style="left:1115px;top:582px;color:#727272;width:129px;"><span class="s" style="width:57px;transform:scaleX(0.919)">FileSession</span></span>
<span class="t c" style="left:979.6px;top:602px;width:130.4px;"><span class="s" style="width:24px;transform:scaleX(0.947)">Start</span> <span class="s" style="width:25px;transform:scaleX(0.937)">Time</span></span>
<span class="t c" style="left:1115px;top:602px;color:#727272;width:129px;"><span class="s" style="width:42px;transform:scaleX(0.899)">11:13:21</span></span>
<span class="t c" style="left:979.6px;top:622px;width:130.4px;"><span class="s" style="width:26px;transform:scaleX(0.928)">State</span></span>
<span class="t c" style="left:1115px;top:622px;color:#727272;letter-spacing:-0.1px;width:129px;">Indexed</span>
<span class="t c" style="left:979.6px;top:642px;width:130.4px;"><span class="s" style="width:25px;transform:scaleX(0.937)">Time</span> <span style="letter-spacing:0.5px">of</span> <span style="letter-spacing:-0.08px">Recording</span></span>
<span class="t c" style="left:1115px;top:642px;color:#727272;width:129px;"><span style="letter-spacing:-0.21px">11/09/2020</span> <span class="s" style="width:42px;transform:scaleX(0.899)">11:13:21</span></span>
<span class="t c" style="left:979.6px;top:662px;width:130.4px;"><span style="letter-spacing:0.16px">Unit</span> <span class="s" style="width:24px;transform:scaleX(0.947)">Data</span> <span class="s" style="width:36px;transform:scaleX(0.947)">Source</span></span>
<span class="t c" style="left:1115px;top:662px;width:129px;"><span class="s" style="width:94px;transform:scaleX(0.946)">TAG-320/HSL-500</span> <span class="s" style="width:33px;transform:scaleX(0.884)">RF,Eth</span></span>
<span class="t c" style="left:979.6px;top:682px;letter-spacing:-0.19px;width:130.4px;">Weather</span>
</body></html>
